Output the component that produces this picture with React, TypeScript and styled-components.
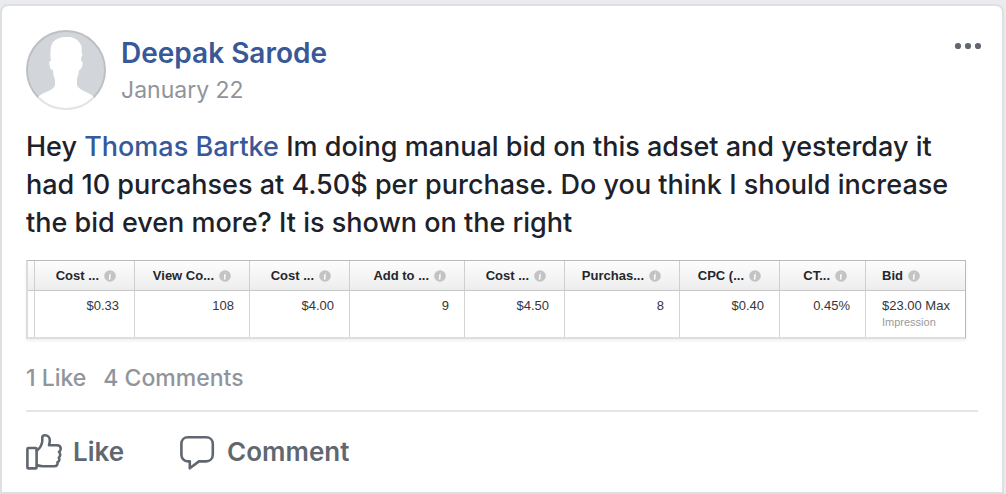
import React from "react";
import styled, { createGlobalStyle } from "styled-components";

const GlobalStyle = createGlobalStyle`
  * { box-sizing: border-box; }
  body {
    margin: 0;
    background: #e9ebee;
    font-family: Inter, "Liberation Sans", sans-serif;
  }
`;

const Page = styled.main`
  padding: 4px 2px 0 0;
`;

const Card = styled.article`
  background: #fff;
  border: 2px solid #dddfe2;
  border-radius: 8px;
  border-bottom-left-radius: 0;
  border-bottom-right-radius: 0;
  padding: 24px 24px 0;
`;

const Header = styled.header`
  display: flex;
  align-items: flex-start;
  gap: 15px;
`;

const Avatar = styled.svg`
  display: block;
  width: 80px;
  height: 80px;
  flex: none;
`;

const Byline = styled.div`
  flex: 1;
  padding-top: 4px;
`;

const Author = styled.a`
  display: block;
  width: fit-content;
  font-size: 28px;
  line-height: 38px;
  font-weight: 600;
  color: #385898;
  text-decoration: none;
`;

const PostDate = styled.time`
  display: block;
  font-size: 23px;
  line-height: 36px;
  color: #90949c;
`;

const MenuButton = styled.button`
  display: flex;
  padding: 8px 0;
  margin-right: -4px;
  border: 0;
  background: none;
  cursor: pointer;
`;

const Message = styled.p`
  margin: 18px 0 18px;
  font-size: 27px;
  font-weight: 500;
  line-height: 38px;
  color: #1d2129;
`;

const Mention = styled.a`
  color: #385898;
  text-decoration: none;
`;

const Report = styled.table`
  width: 100%;
  max-width: 940px;
  table-layout: fixed;
  border-collapse: separate;
  border-spacing: 0;
  border: 1px solid #b9b9b9;
  border-left: 2px solid #dcdcdc;
  border-bottom: 2px solid #dedede;
  box-shadow: 0 2px 3px #f0f0f0;
  font-family: "Liberation Sans", Arial, sans-serif;
  font-size: 13px;
  line-height: 16px;
  color: #33363d;
`;

const HeadCell = styled.th<{ $align?: "left" | "right" }>`
  height: 30px;
  padding: 0 18px 0 16px;
  white-space: nowrap;
  text-align: ${(p) => p.$align ?? "right"};
  font-weight: 700;
  color: #25272c;
  background: linear-gradient(#fdfdfd, #ededed);
  border-bottom: 1px solid #c9c9c9;
  border-left: 1px solid #cfcfcf;
`;

const Cell = styled.td<{ $align?: "left" | "right" }>`
  height: 46px;
  padding: 7px 15px 0 16px;
  vertical-align: top;
  white-space: nowrap;
  text-align: ${(p) => p.$align ?? "right"};
  border-left: 1px solid #d3d3d3;
`;

const EdgeCell = styled.td<{ $head?: boolean }>`
  padding: 0;
  background: ${(p) => (p.$head ? "linear-gradient(#fdfdfd, #ededed)" : "none")};
  border-bottom: ${(p) => (p.$head ? "1px solid #c9c9c9" : "0")};
`;

const Note = styled.div`
  font-size: 11px;
  color: #9a9a9a;
`;

const Info = styled.svg`
  width: 12px;
  height: 12px;
  margin-left: 5px;
  vertical-align: -2px;
`;

const Stats = styled.div`
  display: flex;
  gap: 17px;
  padding: 21px 0 14px;
  border-bottom: 2px solid #e5e5e5;
  font-size: 23px;
  font-weight: 500;
  line-height: 36px;
  color: #90949c;
`;

const StatLink = styled.a`
  color: inherit;
  text-decoration: none;
`;

const Actions = styled.footer`
  display: flex;
  gap: 56px;
  padding: 20px 0;
`;

const ActionButton = styled.button`
  display: flex;
  align-items: center;
  gap: 11px;
  height: 40px;
  padding: 0;
  border: 0;
  background: none;
  font: 600 26px/40px Inter, "Liberation Sans", sans-serif;
  color: #606770;
  cursor: pointer;
`;

const ActionIcon = styled.svg`
  display: block;
  width: 36px;
  height: 38px;
  fill: none;
  stroke: #606770;
  stroke-width: 2.6;
  stroke-linejoin: round;
  stroke-linecap: round;
`;

type Column = {
  label: string;
  value: string;
  width: number;
  note?: string;
};

const columns: Column[] = [
  { label: "Cost ...", value: "$0.33", width: 100 },
  { label: "View Co...", value: "108", width: 115 },
  { label: "Cost ...", value: "$4.00", width: 100 },
  { label: "Add to ...", value: "9", width: 115 },
  { label: "Cost ...", value: "$4.50", width: 100 },
  { label: "Purchas...", value: "8", width: 115 },
  { label: "CPC (...", value: "$0.40", width: 100 },
  { label: "CT...", value: "0.45%", width: 86 },
  { label: "Bid", value: "$23.00 Max", width: 100, note: "Impression" },
];

const InfoIcon = () => (
  <Info viewBox="0 0 12 12" aria-hidden="true">
    <circle cx="6" cy="6" r="5.8" fill="#c2c3c5" />
    <path d="M6.6 2.8v.4M5 5.1h1.2L5.5 8.8h1" fill="none" stroke="#fff" strokeWidth="1.3" />
  </Info>
);

export default function App() {
  return (
    <>
      <GlobalStyle />
      <Page>
        <Card>
          <Header>
            <Avatar viewBox="0 0 80 80" role="img" aria-label="Deepak Sarode">
              <defs>
                <clipPath id="face">
                  <circle cx="40" cy="40" r="40" />
                </clipPath>
              </defs>
              <g clipPath="url(#face)">
                <rect width="80" height="80" fill="#d2d5da" />
                <path
                  fill="#fff"
                  d="M25 31C24 24 24 16 27 12C31 8 36 6.500 41 7C47 7 51 9 53 12C56 15 56 19 55.500 22L56.500 25C55 27 55 29 55 31C57 31 57 34 56 37C55 39 54 40 53 40C53 44 51 47 51 50V55C53 60 59 61 64 64C68 66 70 69 72 74V80H8V74C10 69 12 66 16 64C21 61 28 60 29 55V50C28 47 27 44 27 40C25 40 24 38 23.500 35C23 32 23 31 25 31Z"
                />
              </g>
              <circle cx="40" cy="40" r="39" fill="none" stroke="#000" strokeOpacity=".1" strokeWidth="2" />
            </Avatar>
            <Byline>
              <Author href="#profile">Deepak Sarode</Author>
              <PostDate>January 22</PostDate>
            </Byline>
            <MenuButton aria-label="Post options">
              <svg width="28" height="16" viewBox="0 0 28 16" fill="#606770">
                <circle cx="4" cy="8" r="3.100" />
                <circle cx="14" cy="8" r="3.100" />
                <circle cx="24" cy="8" r="3.100" />
              </svg>
            </MenuButton>
          </Header>

          <Message>
            Hey <Mention href="#mention">Thomas Bartke</Mention> Im doing manual bid on this
            adset and yesterday it had 10 purcahses at 4.50$ per purchase. Do you think I should
            increase the bid even more? It is shown on the right
          </Message>

          <Report>
            <colgroup>
              <col width="6" />
              {columns.map((c, i) => (
                <col key={i} width={c.width} />
              ))}
            </colgroup>
            <thead>
              <tr>
                <EdgeCell $head />
                {columns.map((c, i) => (
                  <HeadCell key={i} scope="col" $align={c.note ? "left" : "right"}>
                    {c.label}
                    <InfoIcon />
                  </HeadCell>
                ))}
              </tr>
            </thead>
            <tbody>
              <tr>
                <EdgeCell />
                {columns.map((c, i) => (
                  <Cell key={i} $align={c.note ? "left" : "right"}>
                    {c.value}
                    {c.note && <Note>{c.note}</Note>}
                  </Cell>
                ))}
              </tr>
            </tbody>
          </Report>

          <Stats>
            <StatLink href="#likes">1 Like</StatLink>
            <StatLink href="#comments">4 Comments</StatLink>
          </Stats>

          <Actions>
            <ActionButton>
              <ActionIcon viewBox="0 0 36 38" aria-hidden="true">
                <rect x="1.400" y="15" width="9.200" height="20.400" rx="1" />
                <path d="M11 17.500C13.500 15.500 16 11.500 16.300 8V4.500C16.300 3 17.500 2.300 19 2.300C22 2.300 23.800 4.500 23.800 7.500C23.800 9.500 23.300 11 23 12.300H31C33.500 12.300 34.700 14 34.700 15.800C34.700 17.500 34 18.500 33 19C34.800 20.500 34.500 23.500 32.800 24.500C34 26.500 33.200 28.500 31.500 29.300C32 31.500 30.500 33.200 28.500 33.200H17C14.500 33.200 12.500 32.800 11 32" />
              </ActionIcon>
              Like
            </ActionButton>
            <ActionButton>
              <ActionIcon viewBox="0 0 36 38" aria-hidden="true">
                <path d="M8 4.300H26C30 4.300 32.800 7 32.800 10.800V21.500C32.800 25.500 30 28.400 26 28.400H19L9.800 35.300V28.400H8C4 28.400 1.400 25.500 1.400 21.500V10.800C1.400 7 4 4.300 8 4.300Z" />
              </ActionIcon>
              Comment
            </ActionButton>
          </Actions>
        </Card>
      </Page>
    </>
  );
}
